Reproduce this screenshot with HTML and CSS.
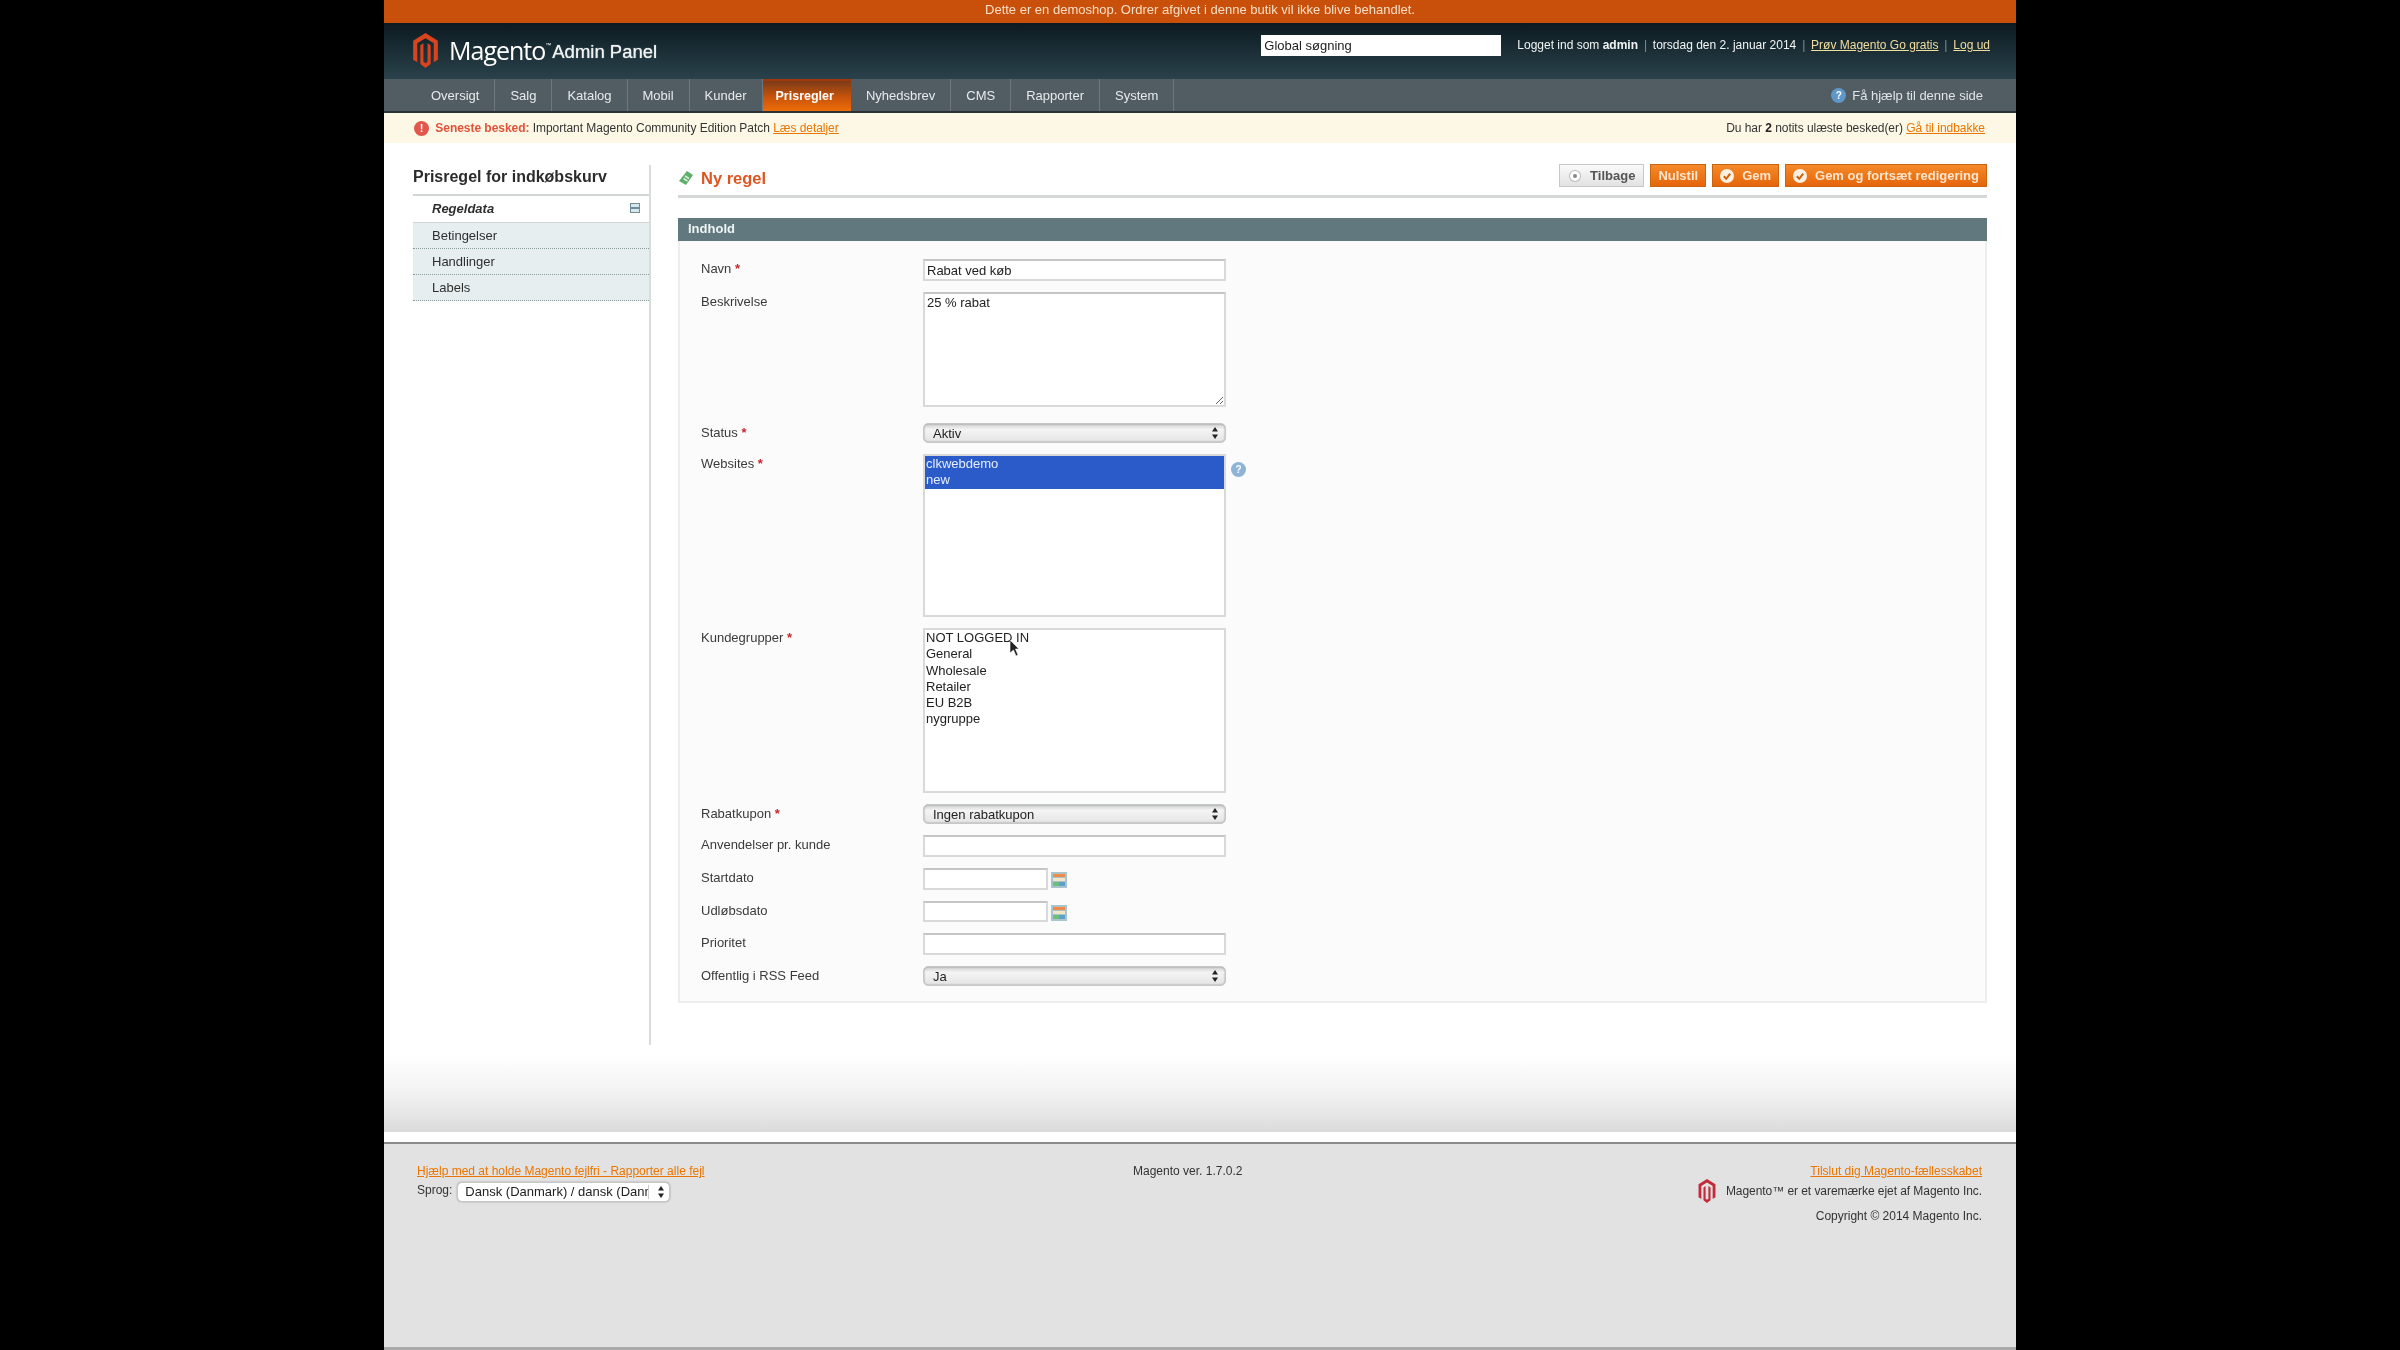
FILE: index.html
```html
<!DOCTYPE html>
<html lang="da">

<head>
  <meta charset="UTF-8">
  <title>Ny regel / Prisregel for indkøbskurv / Magento Admin</title>
  <link rel="stylesheet" href="styles.css">
</head>

<body>
  <svg class="defs" width="0" height="0">
    <symbol id="mage" viewBox="0 0 24 34">
      <path d="M12 0 24 7.500V26l-4 2.500V10L12 5 4 10v18.500L0 26V7.500Z" />
      <path d="M7 12l3 -2v18l2 1.500 2-1.500V10l3 2v18l-5 4-5-4Z" />
    </symbol>
    <symbol id="arrows" viewBox="0 0 6 12">
      <path d="M3 0 6 4.500H0ZM3 12 0 7.500H6Z" />
    </symbol>
    <symbol id="cal" viewBox="0 0 16 16">
      <rect width="16" height="16" fill="#a9c4cc" />
      <rect x="2" y="2" width="12" height="3" fill="#ee8a4a" />
      <rect x="2" y="6" width="12" height="3" fill="#f2e6c8" />
      <rect x="2" y="10" width="6" height="4" fill="#6cbf7c" />
      <rect x="8" y="10" width="6" height="4" fill="#5f9fd0" />
    </symbol>
    <symbol id="check" viewBox="0 0 14 14">
      <circle cx="7" cy="7" r="7" fill="#fdf0e0" />
      <path d="M3.800 7.200 6.200 9.800 10.200 4.600" fill="none" stroke="#c8620f" stroke-width="2" />
    </symbol>
  </svg>

  <div class="page">
    <div class="demo">Dette er en demoshop. Ordrer afgivet i denne butik vil ikke blive behandlet.</div>

    <header class="header">
      <div class="brand">
        <svg class="brand_logo"><use href="#mage" /></svg>
        <span class="brand_name">Magento</span><span class="brand_tm">™</span>
        <span class="brand_sub">Admin Panel</span>
      </div>
      <div class="header_right">
        <input class="search" type="text" value="Global søgning">
        <div class="userinfo">
          Logget ind som <b>admin</b> <i>|</i> torsdag den 2. januar 2014 <i>|</i>
          <a href="#">Prøv Magento Go gratis</a> <i>|</i> <a href="#">Log ud</a>
        </div>
      </div>
    </header>

    <nav class="nav">
      <a href="#">Oversigt</a>
      <a href="#">Salg</a>
      <a href="#">Katalog</a>
      <a href="#">Mobil</a>
      <a href="#">Kunder</a>
      <a href="#" class="on">Prisregler</a>
      <a href="#">Nyhedsbrev</a>
      <a href="#">CMS</a>
      <a href="#">Rapporter</a>
      <a href="#">System</a>
      <div class="nav_help">
        <span class="help_dot">?</span>
        Få hjælp til denne side
      </div>
    </nav>

    <div class="notice">
      <div class="notice_left">
        <span class="notice_icon">!</span>
        <b>Seneste besked:</b> Important Magento Community Edition Patch <a href="#">Læs detaljer</a>
      </div>
      <div>Du har <b class="dark">2</b> notits ulæste besked(er) <a href="#">Gå til indbakke</a></div>
    </div>

    <div class="content">
      <aside class="side">
        <h3 class="side_title">Prisregel for indkøbskurv</h3>
        <div class="tab tab_on">Regeldata <span class="tab_icon"></span></div>
        <div class="tab">Betingelser</div>
        <div class="tab">Handlinger</div>
        <div class="tab">Labels</div>
      </aside>

      <main class="main">
        <div class="head">
          <h3 class="head_title">
            <svg class="head_icon" viewBox="0 0 16 16">
              <path d="M9 1l6 4-7 10-7-4Z" fill="#5fae6a" />
              <path d="M7 6l4 2.500M5.500 8.500l4 2.500" stroke="#d9f0d8" stroke-width="1.500" />
            </svg>
            Ny regel
          </h3>
          <div class="btns">
            <button class="btn btn_back"><span class="back_dot"></span>Tilbage</button>
            <button class="btn">Nulstil</button>
            <button class="btn"><svg class="btn_icon"><use href="#check" /></svg>Gem</button>
            <button class="btn"><svg class="btn_icon"><use href="#check" /></svg>Gem og fortsæt redigering</button>
          </div>
        </div>

        <div class="sec_head">Indhold</div>
        <div class="fieldset">
          <div class="row">
            <label>Navn <em>*</em></label>
            <input class="field" type="text" value="Rabat ved køb">
          </div>
          <div class="row row_tall">
            <label>Beskrivelse</label>
            <textarea class="field area">25 % rabat</textarea>
          </div>
          <div class="row">
            <label>Status <em>*</em></label>
            <div class="select"><span>Aktiv</span><svg class="select_arrows"><use href="#arrows" /></svg></div>
          </div>
          <div class="row">
            <label>Websites <em>*</em></label>
            <div class="list list_sites">
              <div class="opt opt_on">clkwebdemo</div>
              <div class="opt opt_on">new</div>
            </div>
            <span class="help_dot help_form">?</span>
          </div>
          <div class="row">
            <label>Kundegrupper <em>*</em></label>
            <div class="list list_groups">
              <div class="opt">NOT LOGGED IN</div>
              <div class="opt">General</div>
              <div class="opt">Wholesale</div>
              <div class="opt">Retailer</div>
              <div class="opt">EU B2B</div>
              <div class="opt">nygruppe</div>
              <svg class="cursor" viewBox="0 0 10 16">
                <path d="M0 0 9 9H5.500L8 15 6 16 3.500 10 0 13Z" fill="#222" stroke="#fff" stroke-width=".6" />
              </svg>
            </div>
          </div>
          <div class="row">
            <label>Rabatkupon <em>*</em></label>
            <div class="select"><span>Ingen rabatkupon</span><svg class="select_arrows"><use href="#arrows" /></svg></div>
          </div>
          <div class="row">
            <label>Anvendelser pr. kunde</label>
            <input class="field" type="text">
          </div>
          <div class="row">
            <label>Startdato</label>
            <input class="field field_date" type="text">
            <svg class="cal"><use href="#cal" /></svg>
          </div>
          <div class="row">
            <label>Udløbsdato</label>
            <input class="field field_date" type="text">
            <svg class="cal"><use href="#cal" /></svg>
          </div>
          <div class="row">
            <label>Prioritet</label>
            <input class="field" type="text">
          </div>
          <div class="row">
            <label>Offentlig i RSS Feed</label>
            <div class="select"><span>Ja</span><svg class="select_arrows"><use href="#arrows" /></svg></div>
          </div>
        </div>
      </main>
    </div>

    <div class="shade"></div>

    <footer class="footer">
      <div>
        <a href="#">Hjælp med at holde Magento fejlfri - Rapporter alle fejl</a>
        <div class="lang">
          <span>Sprog:</span>
          <div class="select select_lang"><span>Dansk (Danmark) / dansk (Danmark)</span><svg class="select_arrows"><use href="#arrows" /></svg></div>
        </div>
      </div>
      <div>Magento ver. 1.7.0.2</div>
      <div class="footer_right">
        <a href="#">Tilslut dig Magento-fællesskabet</a>
        <div class="legal"><svg class="legal_logo"><use href="#mage" /></svg>Magento™ er et varemærke ejet af Magento Inc.</div>
        <div>Copyright © 2014 Magento Inc.</div>
      </div>
    </footer>
  </div>
</body>

</html>
```

FILE: styles.css
```css
* {
  margin: 0;
  padding: 0;
  box-sizing: border-box;
}

html,
body {
  height: 100%;
  background: #000;
  overflow: hidden;
}

body {
  font-family: "Liberation Sans", Arial, sans-serif;
  font-size: 12px;
  color: #2f2f2f;
}

a {
  color: #ea7601;
}

.defs {
  display: block;
}

.page {
  display: flex;
  flex-direction: column;
  width: 1632px;
  height: 1350px;
  margin-left: 384px;
  background: #fff;
  filter: blur(.5px);
}

/* top bars */
.demo {
  height: 23px;
  line-height: 20px;
  text-align: center;
  font-size: 13px;
  color: #f6dfc6;
  background: #c9500a;
}

.header {
  display: flex;
  justify-content: space-between;
  height: 56px;
  padding: 10px 26px 0 29px;
  background: linear-gradient(#0c1a20, #2a424c);
}

.brand {
  display: flex;
  align-items: flex-start;
  color: #fff;
}

.brand_logo {
  width: 25px;
  height: 35px;
  margin-right: 11px;
  fill: #d9431e;
}

.brand_name {
  font-family: "Open Sans", sans-serif;
  font-size: 25px;
  line-height: 34px;
  letter-spacing: -1px;
}

.brand_tm {
  font-size: 6px;
  line-height: 24px;
  margin-right: 1px;
}

.brand_sub {
  font-size: 18.500px;
  line-height: 37px;
  color: #eef2f3;
  text-shadow: 0 0 1px #eef2f3;
}

.header_right {
  display: flex;
  gap: 16px;
  padding-top: 2px;
}

.search {
  width: 240px;
  height: 21px;
  padding-left: 3px;
  border: 0;
  font: 13px "Liberation Sans", sans-serif;
  color: #222;
  background: #fff;
}

.userinfo {
  padding-top: 3px;
  font-size: 12px;
  color: #f2f4f4;
}

.userinfo i {
  font-style: normal;
  color: #7d9098;
  margin: 0 2.500px;
}

.userinfo a {
  color: #f1dd9c;
}

.nav {
  display: flex;
  align-items: stretch;
  height: 34px;
  padding: 0 33px 0 32px;
  border-bottom: 2px solid #2b3135;
  background: #525d63;
}

.nav a {
  padding: 0 15px;
  line-height: 33px;
  font-size: 13px;
  color: #e6ebec;
  text-decoration: none;
  border-right: 1px solid #6d777c;
}

.nav a.on {
  padding: 0 17px 0 13px;
  font-size: 12.500px;
  font-weight: bold;
  color: #fff;
  border-right: 0;
  border-top: 2px solid #a3360a;
  line-height: 30px;
  background: linear-gradient(#7b3a17, #c9540b 55%, #ee6c08);
}

.nav_help {
  display: flex;
  align-items: center;
  gap: 6px;
  margin-left: auto;
  font-size: 13px;
  color: #dfe5e7;
}

.help_dot {
  display: inline-block;
  width: 15px;
  height: 15px;
  line-height: 15px;
  border-radius: 50%;
  text-align: center;
  font-size: 10px;
  font-weight: bold;
  color: #fff;
  background: #5f97c9;
}

.notice {
  display: flex;
  justify-content: space-between;
  align-items: center;
  height: 30px;
  padding: 0 31px 0 30px;
  font-size: 12px;
  letter-spacing: -.04px;
  color: #333;
  background: #fdf8e6;
}

.notice_left b {
  color: #e0533a;
}

.notice b.dark {
  color: #222;
}

.notice_icon {
  display: inline-block;
  width: 15px;
  height: 15px;
  margin-right: 3px;
  line-height: 15px;
  border-radius: 50%;
  text-align: center;
  font-size: 11px;
  font-weight: bold;
  color: #fff;
  background: #e2574c;
}

/* content */
.content {
  display: flex;
  height: 902px;
  padding: 22px 29px 0 29px;
}

.side {
  width: 238px;
  height: 880px;
  border-right: 2px solid #d8dcdd;
}

.side_title {
  height: 31px;
  padding-top: 2px;
  font-size: 16px;
  line-height: 20px;
  color: #2b2b2b;
  border-bottom: 2px solid #d3d6d6;
}

.tab {
  display: flex;
  justify-content: space-between;
  align-items: center;
  height: 26px;
  padding: 0 9px 0 19px;
  font-size: 13px;
  color: #2f2f2f;
  background: #e6eeef;
  border-bottom: 1px dotted #8b9a9c;
}

.tab_on {
  height: 27px;
  padding-bottom: 2px;
  font-weight: bold;
  font-style: italic;
  background: #fff;
  border-bottom: 1px solid #cfd4d5;
}

.tab_icon {
  width: 10px;
  height: 10px;
  border: 1px solid #6f8c99;
  background: linear-gradient(#dbe6ea 40%, #6f8c99 40%, #6f8c99 60%, #dbe6ea 60%);
}

.main {
  flex: 1;
  margin-left: 27px;
}

.head {
  display: flex;
  justify-content: space-between;
  height: 33px;
  margin-bottom: 20px;
  border-bottom: 3px solid #d6d8d8;
}

.head_title {
  display: flex;
  align-items: center;
  gap: 7px;
  height: 26px;
  font-size: 16.500px;
  color: #dd5520;
}

.head_icon {
  width: 16px;
  height: 18px;
}

.btns {
  display: flex;
  gap: 6px;
  height: 23px;
  margin-top: -1px;
}

.btn {
  display: flex;
  align-items: center;
  gap: 8px;
  padding: 0 7px;
  border: 1px solid #c9650f;
  font: bold 13px "Liberation Sans", sans-serif;
  color: #fde6cd;
  background: linear-gradient(#f58a2a, #e5650a);
}

.btn_back {
  gap: 10px;
  padding: 0 8px 0 10px;
  border-color: #c8c8c8;
  color: #555;
  background: linear-gradient(#fafafa, #e2e2e2);
}

.back_dot {
  width: 10px;
  height: 10px;
  border-radius: 50%;
  border: 3px solid #fff;
  background: #888;
  box-shadow: 0 0 0 1px #bbb;
}

.btn_icon {
  width: 14px;
  height: 14px;
}

.sec_head {
  height: 23px;
  padding-left: 10px;
  line-height: 22px;
  font-size: 13px;
  font-weight: bold;
  color: #f0f4f4;
  background: #60787e;
}

.fieldset {
  display: flex;
  flex-direction: column;
  gap: 11px;
  height: 762px;
  padding: 18px 0 0 21px;
  border: 2px solid #ecedec;
  border-top: 0;
  background: #fbfbfb;
}

.row {
  display: flex;
  align-items: flex-start;
}

.row_tall {
  padding-bottom: 5px;
}

.row label {
  width: 222px;
  line-height: 20px;
  font-size: 13px;
  color: #3a3a3a;
}

.row label em {
  font-style: normal;
  font-weight: bold;
  color: #c9262c;
}

.field {
  display: block;
  width: 303px;
  height: 22px;
  padding: 0 2px;
  border: 2px solid #d8dada;
  border-top-color: #c4c6c6;
  font: 13px "Liberation Sans", sans-serif;
  color: #222;
  background: #fff;
}

.area {
  height: 115px;
  padding-top: 1px;
}

.field_date {
  width: 125px;
  height: 21.500px;
}

.cal {
  width: 16px;
  height: 16px;
  margin: 4px 0 0 3px;
}

.select {
  display: flex;
  align-items: center;
  justify-content: space-between;
  width: 303px;
  height: 20px;
  padding: 0 7px 0 9px;
  border: 1px solid #c6c8c8;
  border-radius: 5px;
  font-size: 13px;
  color: #222;
  background: linear-gradient(#cfd0d0, #f4f4f4 30%, #e4e4e4);
  box-shadow: inset 0 0 2px #888;
}

.select_arrows {
  flex: none;
  width: 6px;
  height: 12px;
  fill: #222;
}

.list {
  position: relative;
  width: 303px;
  border: 2px solid #d8dada;
  font-size: 13px;
  line-height: 16.300px;
  color: #222;
  background: #fff;
}

.list_sites {
  height: 163px;
}

.list_groups {
  height: 165px;
}

.opt {
  padding-left: 1px;
}

.opt_on {
  color: #e6eefc;
  background: #2b5bc8;
}

.help_form {
  margin: 8px 0 0 5px;
  opacity: .7;
}

.cursor {
  position: absolute;
  left: 85px;
  top: 10px;
  width: 10px;
  height: 16px;
}

/* footer */
.shade {
  height: 87px;
  background: linear-gradient(#fff 10%, #f4f4f4 50%, #e6e6e6 80%, #dadada);
}

.footer {
  flex: 1;
  display: grid;
  grid-template-columns: 716px 110px 1fr;
  padding: 20px 34px 0 33px;
  margin-top: 10px;
  border-top: 2px solid #8a8a8a;
  border-bottom: 3px solid #a9a9a9;
  line-height: 14px;
  color: #333;
  background: #e2e2e2;
}

.lang {
  display: flex;
  align-items: flex-start;
  gap: 5px;
  margin-top: 5px;
}

.select_lang {
  width: 213px;
  height: 20px;
  margin-top: -1px;
  padding: 0 5px 0 7px;
  background: #fff;
  box-shadow: 0 0 2px #999;
}

.select_lang span {
  width: 184px;
  overflow: hidden;
  white-space: nowrap;
  border-right: 1px solid #ccc;
}

.footer_right {
  text-align: right;
}

.legal {
  display: flex;
  justify-content: flex-end;
  align-items: center;
  gap: 8px;
  height: 26px;
  margin: 0 0 5px;
  letter-spacing: -.06px;
}

.legal_logo {
  width: 22px;
  height: 24px;
  fill: #c52a3a;
}
```
